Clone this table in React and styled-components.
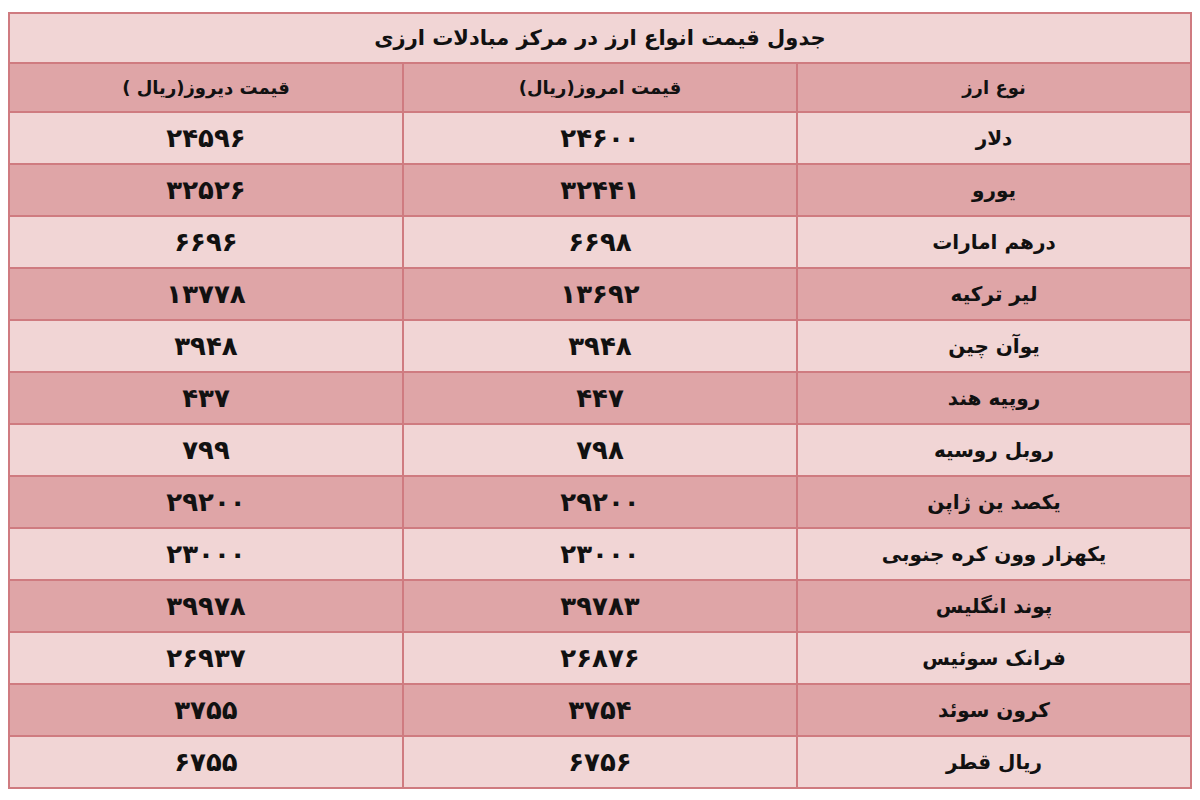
import React from "react";
import styled, { createGlobalStyle } from "styled-components";

const Global = createGlobalStyle`
  html, body { margin: 0; padding: 0; background: #ffffff; }
  body { font-family: "DejaVu Sans", "Noto Sans", sans-serif; }
`;

const Page = styled.div`
  padding: 12px 8px 0 8px;
  width: 1200px;
  box-sizing: border-box;
`;

const Table = styled.table`
  width: 100%;
  border-collapse: collapse;
  direction: rtl;
  table-layout: fixed;
  border: 2px solid #cf7b80;
`;

const Row = styled.tr`
  background: ${(p) => (p.$dark ? "#dfa5a7" : "#f1d5d5")};
`;

const TitleCell = styled.th`
  height: 48px;
  padding: 0;
  border: 2px solid #cf7b80;
  font-size: 21px;
  font-weight: bold;
  color: #111;
  text-align: center;
`;

const HeadCell = styled.th`
  height: 47px;
  padding: 0;
  border: 2px solid #cf7b80;
  font-size: 18px;
  font-weight: bold;
  color: #111;
  text-align: center;
`;

const Cell = styled.td`
  height: 50px;
  padding: 0;
  border: 2px solid #cf7b80;
  font-size: ${(p) => (p.$num ? "26px" : "20px")};
  font-weight: bold;
  color: #111;
  text-align: center;
`;

const rows = [
  ["دلار", "۲۴۶۰۰", "۲۴۵۹۶"],
  ["یورو", "۳۲۴۴۱", "۳۲۵۲۶"],
  ["درهم امارات", "۶۶۹۸", "۶۶۹۶"],
  ["لیر ترکیه", "۱۳۶۹۲", "۱۳۷۷۸"],
  ["یوآن چین", "۳۹۴۸", "۳۹۴۸"],
  ["روپیه هند", "۴۴۷", "۴۳۷"],
  ["روبل روسیه", "۷۹۸", "۷۹۹"],
  ["یکصد ین ژاپن", "۲۹۲۰۰", "۲۹۲۰۰"],
  ["یکهزار وون کره جنوبی", "۲۳۰۰۰", "۲۳۰۰۰"],
  ["پوند انگلیس", "۳۹۷۸۳", "۳۹۹۷۸"],
  ["فرانک سوئیس", "۲۶۸۷۶", "۲۶۹۳۷"],
  ["کرون سوئد", "۳۷۵۴", "۳۷۵۵"],
  ["ریال قطر", "۶۷۵۶", "۶۷۵۵"],
];

export default function App() {
  return (
    <Page>
      <Global />
      <Table>
        <thead>
          <Row>
            <TitleCell colSpan={3}>جدول قیمت انواع ارز در مرکز مبادلات ارزی</TitleCell>
          </Row>
          <Row $dark>
            <HeadCell>نوع ارز</HeadCell>
            <HeadCell>قیمت امروز(ریال)</HeadCell>
            <HeadCell>قیمت دیروز(ریال )</HeadCell>
          </Row>
        </thead>
        <tbody>
          {rows.map((r, i) => (
            <Row key={r[0]} $dark={i % 2 === 1}>
              <Cell>{r[0]}</Cell>
              <Cell $num>{r[1]}</Cell>
              <Cell $num>{r[2]}</Cell>
            </Row>
          ))}
        </tbody>
      </Table>
    </Page>
  );
}
